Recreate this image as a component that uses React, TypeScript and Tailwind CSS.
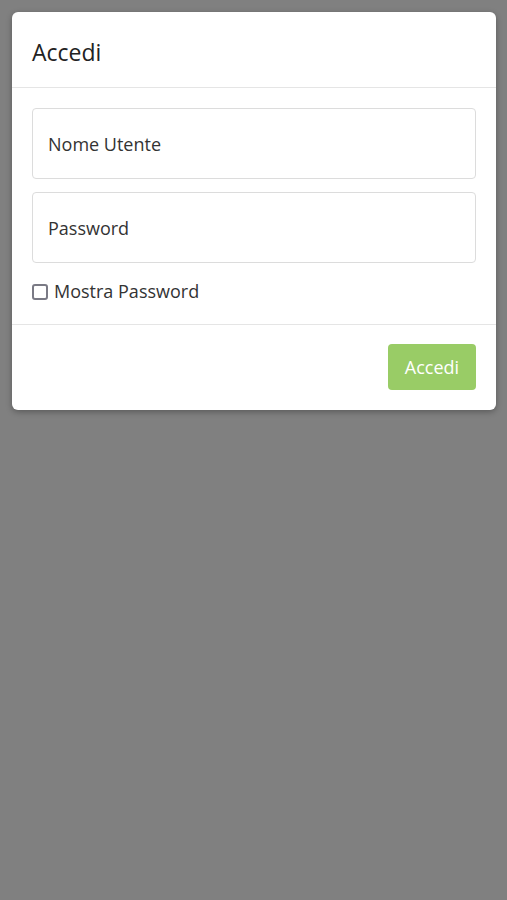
export default function App() {
  return (
    <div
      className="min-h-[900px] bg-[#808080] pt-3 pl-3 pr-[11px]"
      style={{ fontFamily: '"Open Sans", "Noto Sans", sans-serif' }}
    >
      <div className="rounded-md bg-white shadow-[0_2px_6px_rgba(0,0,0,0.3)]">
        {/* Header */}
        <div className="flex h-[76px] items-center border-b border-[#e5e5e5] px-5 pt-[5px]">
          <h1 className="text-[23px] text-[#222]">Accedi</h1>
        </div>

        {/* Body */}
        <div className="flex flex-col gap-[13px] px-5 pt-5 pb-[19px]">
          <input
            type="text"
            placeholder="Nome Utente"
            className="h-[71px] w-full rounded border border-[#dcdcdc] px-[15px] text-[18px] text-[#333] placeholder:text-[#333] outline-none"
          />
          <input
            type="password"
            placeholder="Password"
            className="h-[71px] w-full rounded border border-[#dcdcdc] px-[15px] text-[18px] text-[#333] placeholder:text-[#333] outline-none"
          />
          <label className="mt-[2px] flex items-center gap-[6px] text-[18px] text-[#333]">
            <span className="h-4 w-4 rounded-[3px] border-2 border-[#7a7a85] bg-white" />
            Mostra Password
          </label>
        </div>

        {/* Footer */}
        <div className="flex justify-end border-t border-[#e5e5e5] px-5 pt-[19px] pb-5">
          <button className="h-[46px] w-[88px] rounded bg-[#99cc66] text-[18px] text-white">
            Accedi
          </button>
        </div>
      </div>
    </div>
  );
}
